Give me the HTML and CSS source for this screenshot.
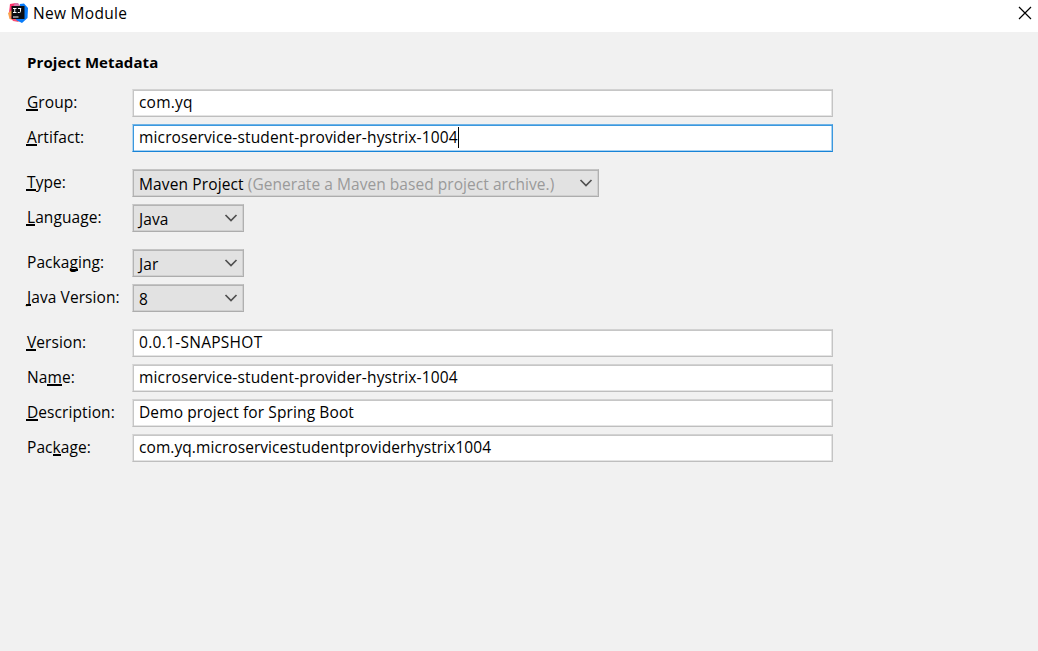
FILE: index.html
```html
<!DOCTYPE html>
<html lang="en">
<head>
    <meta charset="UTF-8">
    <title>New Module</title>
    <link rel="stylesheet" href="styles.css">
</head>
<body>
    <header class="titlebar">
        <svg class="logo" width="20" height="20" viewBox="0 0 20 20">
            <path d="M2 1L8 0l4 3-4 12-7-5z" fill="#fd2f6b"/>
            <path d="M0 10L4 7l7 7-1 4.500L1.500 16z" fill="#f9a04c"/>
            <path d="M2 13l6 2 3 4-6-1z" fill="#fb4e72"/>
            <path d="M12 1L16 0.500l4 4.500-0.500 10-5.500 5-6-3z" fill="#087cfa"/>
            <path d="M7 0h3l3 4H5z" fill="#d777ac"/>
            <rect x="3.500" y="3" width="13" height="13" fill="#0b0d12"/>
            <path d="M5 5.500h3.500M6.750 5.500v4M5 9.500h3.500M10 5.500h3.200M12.500 5.500v3q0 1-1 1H9.800" fill="none" stroke="#fff" stroke-width="1"/>
            <path d="M5 14h5.500" stroke="#fff" stroke-width="1"/>
        </svg>
        <h1 class="title">New Module</h1>
        <svg class="close" width="14" height="14" viewBox="0 0 14 14">
            <path d="M1 1l12 12M13 1L1 13" stroke="#000" stroke-width="1.200"/>
        </svg>
    </header>

    <main class="content">
        <h2 class="heading">Project Metadata</h2>

        <div class="group">
            <div class="row">
                <div class="label"><span class="key first">G</span>roup:</div>
                <div class="field"><span class="group-text">com.yq</span></div>
            </div>
            <div class="row">
                <div class="label"><span class="key first">A</span>rtifact:</div>
                <div class="field focused"><span class="artifact-text">microservice-student-provider-hystrix-1004</span><span class="caret"></span></div>
            </div>
        </div>

        <div class="group">
            <div class="row">
                <div class="label"><span class="key first">T</span>ype:</div>
                <div class="select wide">
                    <span class="type-text">Maven Project</span>
                    <span class="hint">(Generate a Maven based project archive.)</span>
                    <svg class="arrow" width="14" height="8" viewBox="0 0 14 8"><path d="M1.500 1l5.500 5.500L12.500 1"/></svg>
                </div>
            </div>
            <div class="row">
                <div class="label"><span class="key first">L</span>anguage:</div>
                <div class="select">
                    <span>Java</span>
                    <svg class="arrow" width="14" height="8" viewBox="0 0 14 8"><path d="M1.500 1l5.500 5.500L12.500 1"/></svg>
                </div>
            </div>
        </div>

        <div class="group">
            <div class="row">
                <div class="label">Packa<span class="key">g</span>ing:</div>
                <div class="select">
                    <span>Jar</span>
                    <svg class="arrow" width="14" height="8" viewBox="0 0 14 8"><path d="M1.500 1l5.500 5.500L12.500 1"/></svg>
                </div>
            </div>
            <div class="row">
                <div class="label"><span class="key first">J</span>ava Version:</div>
                <div class="select">
                    <span>8</span>
                    <svg class="arrow" width="14" height="8" viewBox="0 0 14 8"><path d="M1.500 1l5.500 5.500L12.500 1"/></svg>
                </div>
            </div>
        </div>

        <div class="group">
            <div class="row">
                <div class="label"><span class="key first">V</span>ersion:</div>
                <div class="field"><span class="version-text">0.0.1-SNAPSHOT</span></div>
            </div>
            <div class="row">
                <div class="label">Na<span class="key">m</span>e:</div>
                <div class="field"><span class="artifact-text">microservice-student-provider-hystrix-1004</span></div>
            </div>
            <div class="row">
                <div class="label"><span class="key first">D</span>escription:</div>
                <div class="field"><span class="description-text">Demo project for Spring Boot</span></div>
            </div>
            <div class="row">
                <div class="label">Pac<span class="key">k</span>age:</div>
                <div class="field"><span class="package-text">com.yq.microservicestudentproviderhystrix1004</span></div>
            </div>
        </div>
    </main>
</body>
</html>
```
FILE: styles.css
```css
* {
    box-sizing: border-box;
}
body {
    margin: 0;
    height: 651px;
    overflow: hidden;
    background-color: #f1f1f1;
    color: #000;
    font-family: "Open Sans", "Noto Sans", sans-serif;
    font-size: 15.5px;
    line-height: 20px;
    white-space: nowrap;
}
.titlebar {
    display: flex;
    align-items: flex-start;
    height: 32px;
    padding: 3px 6px 0 8px;
    background-color: #fff;
}
.title {
    margin: 0 auto 0 5px;
    font-size: 15.5px;
    font-weight: normal;
    letter-spacing: 0.3px;
}
.close {
    margin-top: 3px;
}
.content {
    padding: 20px 26px;
}
.heading {
    margin: 0 0 17px 1px;
    font-size: 15px;
    font-weight: bold;
    letter-spacing: 0.1px;
}
.group {
    display: grid;
    gap: 7px;
    margin-bottom: 17px;
}
.row {
    display: flex;
    height: 28px;
}
.label {
    width: 106px;
    padding: 3px 0 0 1px;
    letter-spacing: 0.08px;
}
.key {
    display: inline-block;
    height: 19px;
    border-bottom: 2px solid #000;
}
.key.first {
    margin-left: -1px;
    padding-left: 1px;
}
.field {
    display: flex;
    width: 701px;
    padding: 2px 6px;
    border: 1px solid;
    border-color: #d2d2d2 #c4c4c4 #bebebe #e0e0e0;
    box-shadow: inset 1px 1px 0 #c6c6c6, inset -1px -1px 0 #e4e4e4;
    background-color: #fff;
}
.focused {
    border-color: #6fb3e6 #3b98de #1883d7 #b4d5ee;
    box-shadow: inset 1px 1px 0 #3b98de, inset -1px -1px 0 #a8d2f2;
}
.caret {
    width: 1px;
    height: 21px;
    background-color: #000;
}
.group-text {
    letter-spacing: 0.2px;
}
.artifact-text {
    letter-spacing: 0.15px;
}
.version-text {
    letter-spacing: 0.28px;
}
.description-text {
    letter-spacing: 0.12px;
}
.package-text {
    letter-spacing: 0.07px;
}
.type-text {
    letter-spacing: 0.13px;
}
.select {
    display: flex;
    width: 112px;
    padding: 4px 5px 0 6px;
    border: 1px solid;
    border-color: #c4c4c4 #b0b0b0 #adadad #dadada;
    box-shadow: inset 1px 1px 0 #b4b4b4, inset -1px -1px 0 #d0d0d0;
    background-color: #e2e2e2;
    letter-spacing: 0.1px;
}
.wide {
    width: 467px;
}
.hint {
    margin-left: 4px;
    color: #9a9a9a;
    letter-spacing: 0.05px;
}
.arrow {
    margin: 5px 0 0 auto;
    fill: none;
    stroke: #505050;
    stroke-width: 1.7;
}
```
